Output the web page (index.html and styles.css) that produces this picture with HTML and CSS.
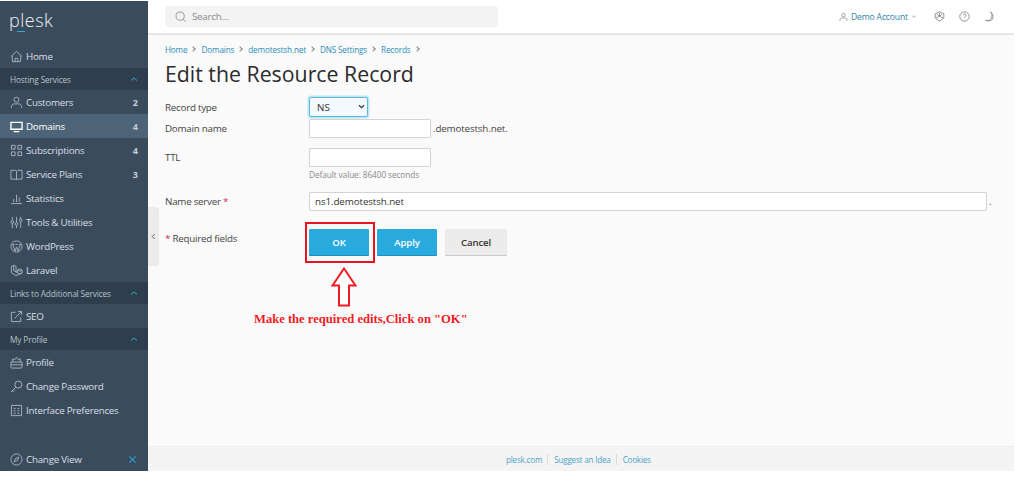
FILE: index.html
```html
<!DOCTYPE html>
<html lang="en">
<head>
<meta charset="utf-8">
<title>Edit the Resource Record</title>
<link rel="stylesheet" href="styles.css">
</head>
<body>
<div class="app">
  <aside class="sidebar">
    <div class="logo"><span class="logo-text">plesk</span><span class="logo-bar"></span></div>
    <a class="item"><svg class="ic" viewBox="0 0 14 14"><path d="M1 7 7 1.500 13 7M2.500 6v6.500h9V6M5.500 12.500V9h3v3.500"/></svg><span class="lbl">Home</span></a>
    <div class="group"><span>Hosting Services</span><svg class="chev" viewBox="0 0 10 6"><path d="M2 4.500 5 2l3 2.500"/></svg></div>
    <a class="item"><svg class="ic" viewBox="0 0 14 14"><circle cx="7" cy="4" r="2.700"/><path d="M1.500 13v-1.500c0-2 1.500-3 3-3h5c1.500 0 3 1 3 3V13"/></svg><span class="lbl">Customers</span><b class="num">2</b></a>
    <a class="item active"><svg class="ic solid" viewBox="0 0 14 14"><path d="M1 2.500h12v7.500H1zM4 12.500h6"/></svg><span class="lbl">Domains</span><b class="num">4</b></a>
    <a class="item"><svg class="ic" viewBox="0 0 14 14"><path d="M1.500 1.500h4v4h-4zM8.500 1.500h4v4h-4zM1.500 8.500h4v4h-4zM8.500 8.500h4v4h-4z"/></svg><span class="lbl">Subscriptions</span><b class="num">4</b></a>
    <a class="item"><svg class="ic" viewBox="0 0 14 14"><path d="M1 2.500h5l1 1 1-1h5V12H8l-1 .5L6 12H1zM7 3.500v9"/></svg><span class="lbl">Service Plans</span><b class="num">3</b></a>
    <a class="item"><svg class="ic" viewBox="0 0 14 14"><path d="M1 12.500h12M4 11V7.500M7 11V3M10 11V6"/></svg><span class="lbl">Statistics</span></a>
    <a class="item"><svg class="ic" viewBox="0 0 14 14"><path d="M2.500 1v4M2.500 8v5M7 1v6M7 10v3M11.500 1v2M11.500 6v7"/><circle cx="2.500" cy="6.500" r="1.500"/><circle cx="7" cy="8.500" r="1.500"/><circle cx="11.500" cy="4.500" r="1.500"/></svg><span class="lbl">Tools &amp; Utilities</span></a>
    <a class="item"><svg class="ic" viewBox="0 0 14 14"><circle cx="7" cy="7" r="6"/><path d="M3 5l2.500 7L7 7.500 8.700 12 11 5M2.500 4.800h2.500M6 4.800h2.500M10 4.800h2"/></svg><span class="lbl">WordPress</span></a>
    <a class="item"><svg class="ic" viewBox="0 0 14 14"><path d="M1.500 2.500 4 1.500l2.500 1v6l4 2.300 2.500-1.300M1.500 2.500v7L6.500 12.500l6.500-3v-3l-2.500-1.300-2.500 1.300v3M6.500 8.500 4 7.200V1.500M8 6.500l2.500 1.300L13 6.500"/></svg><span class="lbl">Laravel</span></a>
    <div class="group"><span>Links to Additional Services</span><svg class="chev" viewBox="0 0 10 6"><path d="M2 4.500 5 2l3 2.500"/></svg></div>
    <a class="item"><svg class="ic" viewBox="0 0 14 14"><path d="M6 2.500H1.500v10h10V8M5 9l7.500-7.500M8.500 1.500h4v4"/></svg><span class="lbl">SEO</span></a>
    <div class="group"><span>My Profile</span><svg class="chev" viewBox="0 0 10 6"><path d="M2 4.500 5 2l3 2.500"/></svg></div>
    <a class="item"><svg class="ic" viewBox="0 0 14 14"><path d="M1 6.500h12v5.500c0 .5-.5 1-1 1H2c-.5 0-1-.5-1-1zM3 6.500V3l2 1 2-2.500L9 4l2-1v3.500M1 9.500h12"/></svg><span class="lbl">Profile</span></a>
    <a class="item"><svg class="ic" viewBox="0 0 14 14"><circle cx="9" cy="5" r="3.800"/><path d="M6.300 7.700 1 13M2.500 11.500l1.500 1.500M4 10l1.300 1.300"/></svg><span class="lbl">Change Password</span></a>
    <a class="item"><svg class="ic" viewBox="0 0 14 14"><path d="M1.500 1.500h11v11h-11zM4 5h2M8 5h2M4 7.500h2M8 7.500h2M4 10h2M8 10h2"/></svg><span class="lbl">Interface Preferences</span></a>
    <a class="item view"><svg class="ic" viewBox="0 0 14 14"><circle cx="7" cy="7" r="6"/><path d="M4.500 9.500 6 6l3.500-1.500L8 8z"/></svg><span class="lbl">Change View</span><svg class="close" viewBox="0 0 10 10"><path d="M1.500 1.500l7 7M8.500 1.500l-7 7"/></svg></a>
  </aside>

  <div class="main">
    <header class="topbar">
      <div class="search"><svg class="search-ic" viewBox="0 0 14 14"><circle cx="6" cy="6" r="4.800"/><path d="M9.500 9.500l3 3"/></svg><span>Search...</span></div>
      <div class="tools">
        <a class="account"><svg class="t-ic small" viewBox="0 0 14 14"><circle cx="7" cy="4" r="2.700"/><path d="M1.500 13v-1.500c0-2 1.500-3 3-3h5c1.500 0 3 1 3 3V13"/></svg>Demo Account<svg class="caret" viewBox="0 0 8 6"><path d="M1.500 2 4 4.200 6.500 2"/></svg></a>
        <svg class="t-ic" viewBox="0 0 14 14"><path d="M7 1 12.500 3.500V9L7 13 1.500 9V3.500z"/><path d="M7 2v4.500M2.500 9 7 6.500 11.500 9M3.500 4 7 6.500 10.500 4"/></svg>
        <svg class="t-ic" viewBox="0 0 14 14"><circle cx="7" cy="7" r="6"/><path d="M5.200 5.400c0-2.400 3.700-2.400 3.700 0 0 1.500-1.900 1.500-1.900 3M7 10v.6"/></svg>
        <svg class="t-ic" viewBox="0 0 14 14"><path d="M8 1c3 2.500 3 8-1 10.500-1.500 1-3.500 1-5 .5 3.500 1 7.500 1 9-2 1.500-3.500 0-7-3-9z"/></svg>
      </div>
    </header>

    <main class="content">
      <button class="collapse" type="button" aria-label="Collapse"><svg viewBox="0 0 6 8"><path d="M4.500 1 1.500 4l3 3"/></svg></button>
      <nav class="crumbs"><a>Home</a><i></i><a>Domains</a><i></i><a>demotestsh.net</a><i></i><a>DNS Settings</a><i></i><a>Records</a><i></i></nav>
      <h1 class="title">Edit the Resource Record</h1>
      <form class="form">
        <div class="row r-type"><label>Record type</label><div class="field"><div class="sel-wrap"><select class="sel"><option>NS</option></select><svg class="sel-arrow" viewBox="0 0 8 6"><path d="M1 1.500 4 4.500 7 1.500"/></svg></div></div></div>
        <div class="row r-domain"><label>Domain name</label><div class="field"><input class="inp short" type="text"><span class="suffix">.demotestsh.net.</span></div></div>
        <div class="row r-ttl"><label>TTL</label><div class="field col"><input class="inp short" type="text"><small class="hint">Default value: 86400 seconds</small></div></div>
        <div class="row r-ns"><label>Name server <em>*</em></label><div class="field"><input class="inp wide" type="text" value="ns1.demotestsh.net"><span class="suffix dot">.</span></div></div>
        <div class="row r-btn"><label><em>*</em> Required fields</label><div class="btns"><button class="btn primary" type="button">OK</button><button class="btn primary" type="button">Apply</button><button class="btn plain" type="button">Cancel</button></div></div>
      </form>
      <div class="mark"></div>
      <svg class="arrow" viewBox="0 0 26 40"><path d="M13 1.500 24.500 18.500H18V38.500H8V18.500H1.500z"/></svg>
      <p class="note">Make the required edits,Click on "OK"</p>
    </main>

    <footer class="foot"><a>plesk.com</a><a>Suggest an Idea</a><a>Cookies</a></footer>
  </div>
</div>
</body>
</html>
```
FILE: styles.css
```css
* { box-sizing: border-box; }
html, body { margin: 0; padding: 0; background: #fff; }
body { height: 484px; overflow: hidden; font-family: "Open Sans", sans-serif; font-size: 9.800px; letter-spacing: -.25px; color: #333; }
a { text-decoration: none; }

.app { display: flex; width: 1014px; height: 470px; margin-top: 1px; }

.sidebar { width: 148px; flex: none; display: flex; flex-direction: column; background: #3a4b5c; color: #d6dce2; position: relative; }
.logo { height: 43px; padding: 6px 0 0 9px; position: relative; }
.logo-text { font-size: 18px; font-weight: 300; line-height: 26px; letter-spacing: .5px; color: #eef1f3; }
.logo-bar { position: absolute; left: 17px; top: 30px; width: 8px; height: 1px; background: #28aade; }
.item { height: 24px; flex: none; display: flex; align-items: center; padding: 1px 10px 0 10px; color: #d9dfe4; font-size: 9.800px; line-height: 22px; }
.item.active { background: #4d6478; color: #fff; }
.ic { width: 13px; height: 13px; flex: none; margin-right: 3px; fill: none; stroke: #aab4bd; stroke-width: 1; }
.ic.solid { stroke: #fff; stroke-width: 1.500; }
.lbl { flex: 1; }
.num { font-weight: 700; font-size: 9px; color: #c5ced5; letter-spacing: 0; }
.group { height: 22px; flex: none; display: flex; align-items: center; justify-content: space-between; padding: 0 9px 0 10px; background: #2f3e4c; color: #b7c1ca; font-size: 8.300px; letter-spacing: -.15px; }
.chev { width: 10px; height: 6px; fill: none; stroke: #28aade; stroke-width: 1; }
.view { margin-top: 25px; }
.close { width: 9px; height: 9px; fill: none; stroke: #2b9fd8; stroke-width: 1.200; margin-right: 1px; }

.main { flex: 1; min-width: 0; display: flex; flex-direction: column; }
.topbar { height: 34px; flex: none; background: #fff; border-bottom: 2px solid #e6e6e6; display: flex; align-items: center; justify-content: space-between; padding: 0 19px 1px 17px; }
.search { width: 333px; height: 21px; background: #f3f3f3; border-radius: 3px; display: flex; align-items: center; padding-left: 10px; color: #8b8b8b; font-size: 9.800px; }
.search-ic { width: 12px; height: 12px; margin-right: 5px; fill: none; stroke: #8b8b8b; stroke-width: 1; }
.tools { display: flex; align-items: center; gap: 14px; }
.account { display: flex; align-items: center; color: #2f7fa8; font-size: 8.600px; letter-spacing: -.15px; margin-right: 3px; }
.t-ic { width: 11px; height: 11px; fill: none; stroke: #7b7b7b; stroke-width: 1; }
.t-ic.small { width: 9px; height: 10px; margin-right: 3px; }
.caret { width: 6px; height: 5px; margin-left: 3px; fill: none; stroke: #999; stroke-width: 1; }

.content { flex: 1; background: #fafafa; padding: 7px 8px 0 17px; position: relative; }
.collapse { position: absolute; left: 0; top: 172px; width: 11px; height: 59px; border: 0; padding: 0 0 0 3px; background: #ebebeb; border-radius: 0 3px 3px 0; display: flex; align-items: center; }
.collapse svg { width: 5px; height: 7px; fill: none; stroke: #444; stroke-width: 1; }
.crumbs { display: flex; align-items: center; height: 14px; font-size: 8.200px; letter-spacing: -.17px; color: #2a8fb8; }
.crumbs a { color: #2a8fb8; }
.crumbs i { width: 4px; height: 4px; margin: 0 6px 0 4px; border-top: 1px solid #888; border-right: 1px solid #888; transform: rotate(45deg); }
.title { margin: 3px 0 0; font-size: 21.300px; font-weight: 400; line-height: 30px; letter-spacing: 0; color: #2b2b2b; }

.form { margin-top: 7px; }
.row { display: flex; align-items: flex-start; }
.row label { width: 144px; flex: none; font-size: 9.800px; line-height: 14px; color: #444; }
.row em { font-style: normal; color: #d02d4f; }
.field { display: flex; align-items: flex-start; flex: 1; min-width: 0; }
.field.col { flex-direction: column; }
.r-type { height: 23px; padding-top: 1px; }
.r-type label { padding-top: 4px; }
.r-domain { height: 29px; }
.r-domain label { padding-top: 3px; }
.r-ttl { height: 44px; }
.r-ttl label { padding-top: 3px; }
.r-ns { height: 37px; }
.r-ns label { padding-top: 3px; }
.r-btn label { padding-top: 3px; }
.sel-wrap { position: relative; width: 59px; height: 20px; }
.sel { appearance: none; width: 59px; height: 20px; padding: 0 0 0 7px; border: 1px solid #5cb8e0; border-radius: 2px; box-shadow: 0 0 0 1.500px #bfe6f5; background: #f4fafd; font: 9.800px "Open Sans", sans-serif; color: #333; }
.sel-arrow { position: absolute; right: 3px; top: 7px; width: 7px; height: 5px; fill: none; stroke: #333; stroke-width: 1.300; pointer-events: none; }
.inp { height: 19px; border: 1px solid #d3d3d3; border-radius: 1px; background: #fff; padding: 0 5px; font: 9.800px "Open Sans", sans-serif; letter-spacing: -.1px; color: #333; }
.short { width: 122px; }
.wide { width: 678px; }
.suffix { font-size: 9.800px; line-height: 19px; margin-left: 2px; color: #444; letter-spacing: -.15px; }
.hint { margin-top: 2px; font-size: 8.300px; line-height: 12px; letter-spacing: -.1px; color: #8a8a8a; }
.btns { display: flex; gap: 8px; }
.btn { height: 27px; border: 0; border-radius: 1px; font: 600 9.600px "Open Sans", sans-serif; letter-spacing: -.1px; }
.primary { width: 60px; background: #28aade; color: #fff; border-bottom: 1px solid #1f8ebd; }
.plain { width: 62px; background: #ececec; color: #333; border-bottom: 1px solid #c9c9c9; }

.mark { position: absolute; left: 157px; top: 187px; width: 70px; height: 41px; border: 2.500px solid #e8141f; }
.arrow { position: absolute; left: 183px; top: 232px; width: 26px; height: 40px; fill: #fff; stroke: #ee1c25; stroke-width: 2; }
.note { position: absolute; left: 106px; top: 277px; margin: 0; font: 700 12.600px "Liberation Serif", serif; letter-spacing: 0; color: #ee1c25; white-space: nowrap; }

.foot { height: 25px; flex: none; background: #f4f4f4; border-top: 1px solid #ececec; display: flex; align-items: center; padding-left: 352px; font-size: 8.100px; letter-spacing: -.2px; }
.foot a { color: #4ba3c7; padding: 0 5px 0 6px; line-height: 11px; border-left: 1px solid #dcdcdc; }
.foot a:first-child { border-left: 0; }
```
